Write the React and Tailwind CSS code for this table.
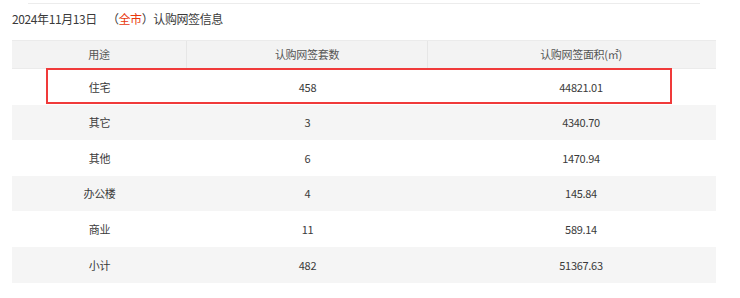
const ROWS = [
  { use: '住宅', count: '458', area: '44821.01', hl: true },
  { use: '其它', count: '3', area: '4340.70' },
  { use: '其他', count: '6', area: '1470.94' },
  { use: '办公楼', count: '4', area: '145.84' },
  { use: '商业', count: '11', area: '589.14' },
  { use: '小计', count: '482', area: '51367.63' },
]

const FONT = { fontFamily: '"Microsoft YaHei", "Noto Sans CJK SC", sans-serif' }

export default function App() {
  return (
    <div className="relative h-[298px] w-[740px] overflow-hidden bg-white text-[#3a3a3a]" style={FONT}>
      <div className="ml-[28px] mt-[3px] h-px w-[672px] bg-[#ececec]" />
      <div className="ml-[12px] mt-[7px] flex h-[16px] items-center text-[12px] leading-[16px] tracking-[-0.4px]">
        <span>2024年11月13日</span>
        <span className="ml-[10px]">（</span>
        <span className="text-[#e8380d]">全市</span>
        <span>）认购网签信息</span>
      </div>

      <div className="ml-[12px] mt-[13px] w-[704px] text-[11px] tracking-[-0.3px]">
        <div className="flex h-[29px] items-center border-y border-[#ebebeb] bg-[#f3f3f3] text-[#555]">
          <div className="flex h-full w-[175px] items-center justify-center border-r border-[#e6e6e6]">用途</div>
          <div className="flex h-full w-[241px] items-center justify-center border-r border-[#e6e6e6]">认购网签套数</div>
          <div className="flex h-full flex-1 items-center justify-center pl-[18px]">认购网签面积(㎡)</div>
        </div>
        {ROWS.map((r, i) => (
          <div
            key={r.use}
            className={`flex h-[35.6px] items-center ${i % 2 === 1 ? 'bg-[#f5f5f5]' : 'bg-white'}`}
          >
            <div className="w-[175px] text-center">{r.use}</div>
            <div className="w-[241px] text-center">{r.count}</div>
            <div className="flex-1 pl-[18px] text-center">{r.area}</div>
          </div>
        ))}
      </div>

      <div className="absolute left-[46px] top-[68px] h-[36px] w-[626px] border-2 border-[#f03a3a]" />
    </div>
  )
}
